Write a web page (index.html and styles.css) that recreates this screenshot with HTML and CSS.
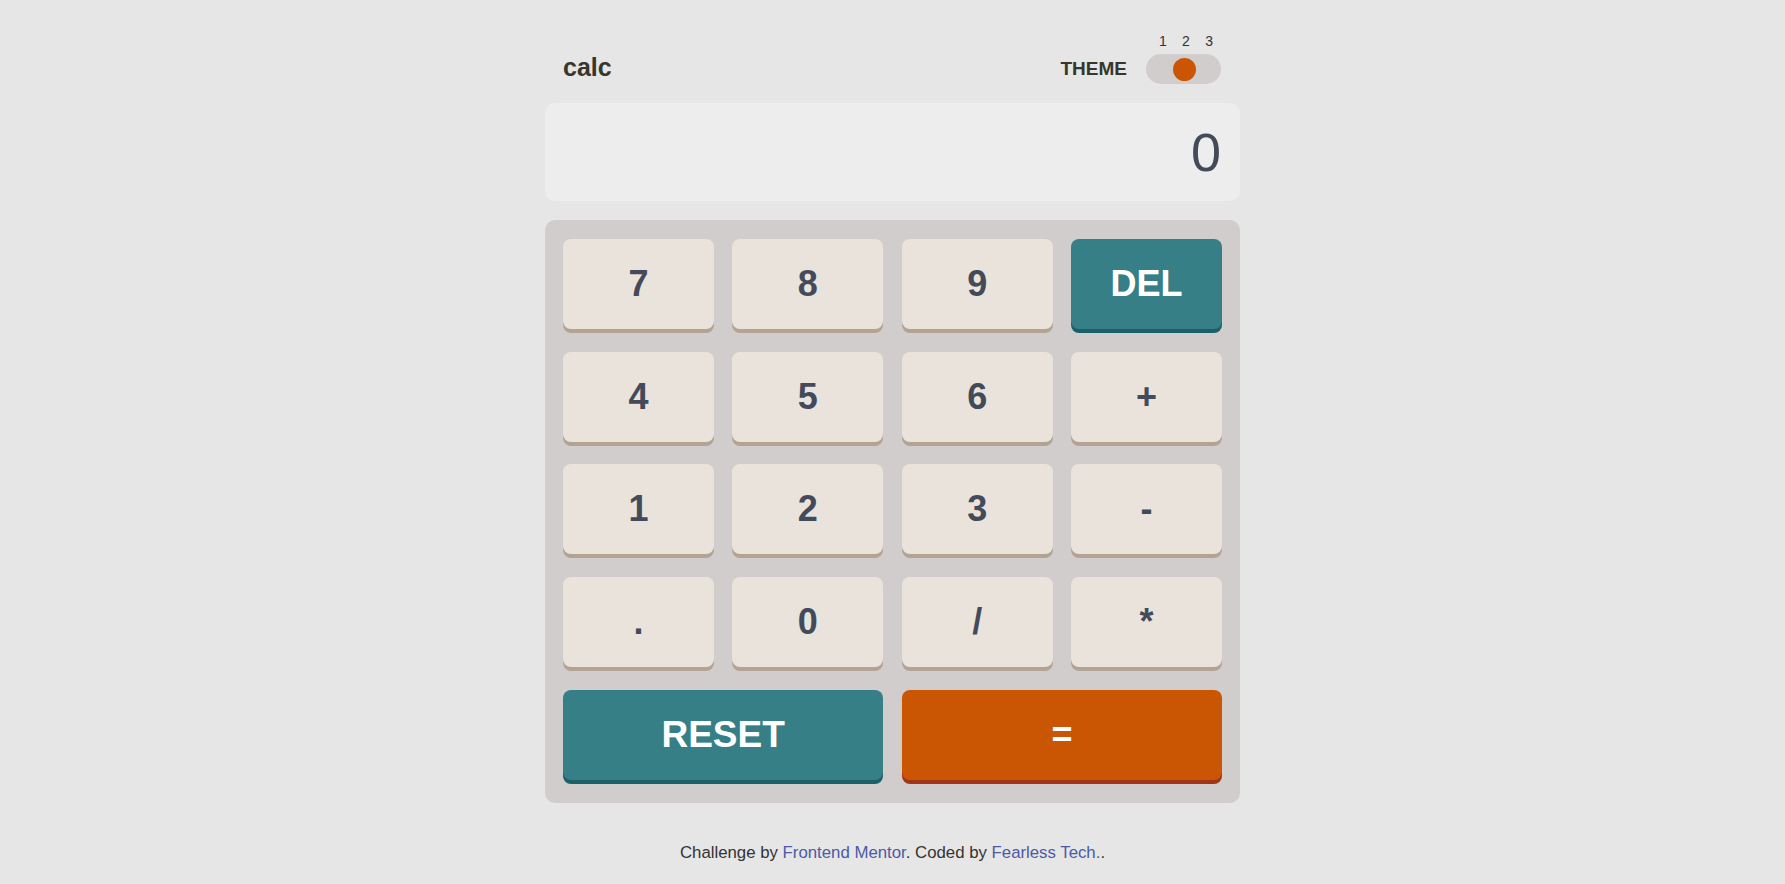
FILE: index.html
```html
<!DOCTYPE html>
<html lang="en">
<head>
<meta charset="utf-8">
<title>Calculator</title>
<link rel="stylesheet" href="styles.css">
</head>
<body>
<main class="app">
  <header class="header">
    <h1 class="logo">calc</h1>
    <span class="theme-label">THEME</span>
    <div class="theme-nums"><span>1</span><span>2</span><span>3</span></div>
    <div class="toggle"><span class="knob"></span></div>
  </header>
  <section class="screen">0</section>
  <section class="keypad">
    <button class="key">7</button>
    <button class="key">8</button>
    <button class="key">9</button>
    <button class="key key-blue">DEL</button>
    <button class="key">4</button>
    <button class="key">5</button>
    <button class="key">6</button>
    <button class="key">+</button>
    <button class="key">1</button>
    <button class="key">2</button>
    <button class="key">3</button>
    <button class="key">-</button>
    <button class="key">.</button>
    <button class="key">0</button>
    <button class="key">/</button>
    <button class="key">*</button>
    <button class="key key-blue key-wide">RESET</button>
    <button class="key key-orange key-wide">=</button>
  </section>
  <footer class="attribution">
    Challenge by <a href="#">Frontend Mentor</a>. Coded by <a href="#">Fearless Tech.</a>.
  </footer>
</main>
</body>
</html>
```
FILE: styles.css
```css
* { box-sizing: border-box; }

html, body {
  margin: 0;
  padding: 0;
}

body {
  background: #e6e6e6;
  font-family: "Liberation Sans", Arial, sans-serif;
  color: #36362c;
}

.app {
  width: 695px;
  margin: 0 auto;
  padding-top: 33px;
}

.header {
  display: grid;
  grid-template-columns: 1fr auto 75px;
  grid-template-rows: 16px 30px;
  column-gap: 19px;
  row-gap: 5px;
  align-items: center;
  padding: 0 19px 0 18px;
}

.logo {
  grid-column: 1;
  grid-row: 2;
  margin: 0;
  font-size: 25px;
  font-weight: 700;
  line-height: 30px;
  position: relative;
  top: -2px;
}

.theme-label {
  grid-column: 2;
  grid-row: 2;
  font-size: 19px;
  font-weight: 700;
  line-height: 30px;
}

.theme-nums {
  grid-column: 3;
  grid-row: 1;
  display: flex;
  justify-content: space-between;
  padding: 0 8px 0 13px;
  font-size: 14px;
  line-height: 16px;
  color: #333;
}

.toggle {
  grid-column: 3;
  grid-row: 2;
  height: 30px;
  border-radius: 15px;
  background: #d2cdcd;
  display: flex;
  align-items: center;
  justify-content: center;
  padding-left: 2px;
}

.knob {
  width: 23px;
  height: 23px;
  border-radius: 50%;
  background: #ca5502;
}

.screen {
  margin-top: 19px;
  height: 98px;
  background: #ededed;
  border-radius: 10px;
  display: flex;
  align-items: center;
  justify-content: flex-end;
  padding: 0 19px;
  font-size: 54px;
  color: #434a59;
}

.keypad {
  margin-top: 19px;
  background: #d2cdcd;
  border-radius: 10px;
  padding: 19px 18px 23px;
  display: grid;
  grid-template-columns: repeat(4, 1fr);
  grid-auto-rows: 90px;
  column-gap: 18.6px;
  row-gap: 22.7px;
}

.key {
  border: 0;
  border-radius: 8px;
  background: #e9e3dc;
  box-shadow: 0 4px 0 #b3a395;
  font-family: "Liberation Sans", Arial, sans-serif;
  font-size: 36px;
  font-weight: 700;
  color: #434a59;
  padding: 0;
  cursor: pointer;
}

.key-blue {
  background: #377f86;
  box-shadow: 0 4px 0 #1b6066;
  color: #fff;
}

.key-blue.key-wide {
  font-size: 37px;
}

.key-orange {
  background: #ca5502;
  box-shadow: 0 4px 0 #a0351a;
  color: #fff;
}

.key-wide {
  grid-column: span 2;
}

.attribution {
  margin-top: 40px;
  text-align: center;
  font-size: 16.8px;
  line-height: 20px;
  color: #333;
}

.attribution a {
  color: #4b5aa5;
  text-decoration: none;
}
```
